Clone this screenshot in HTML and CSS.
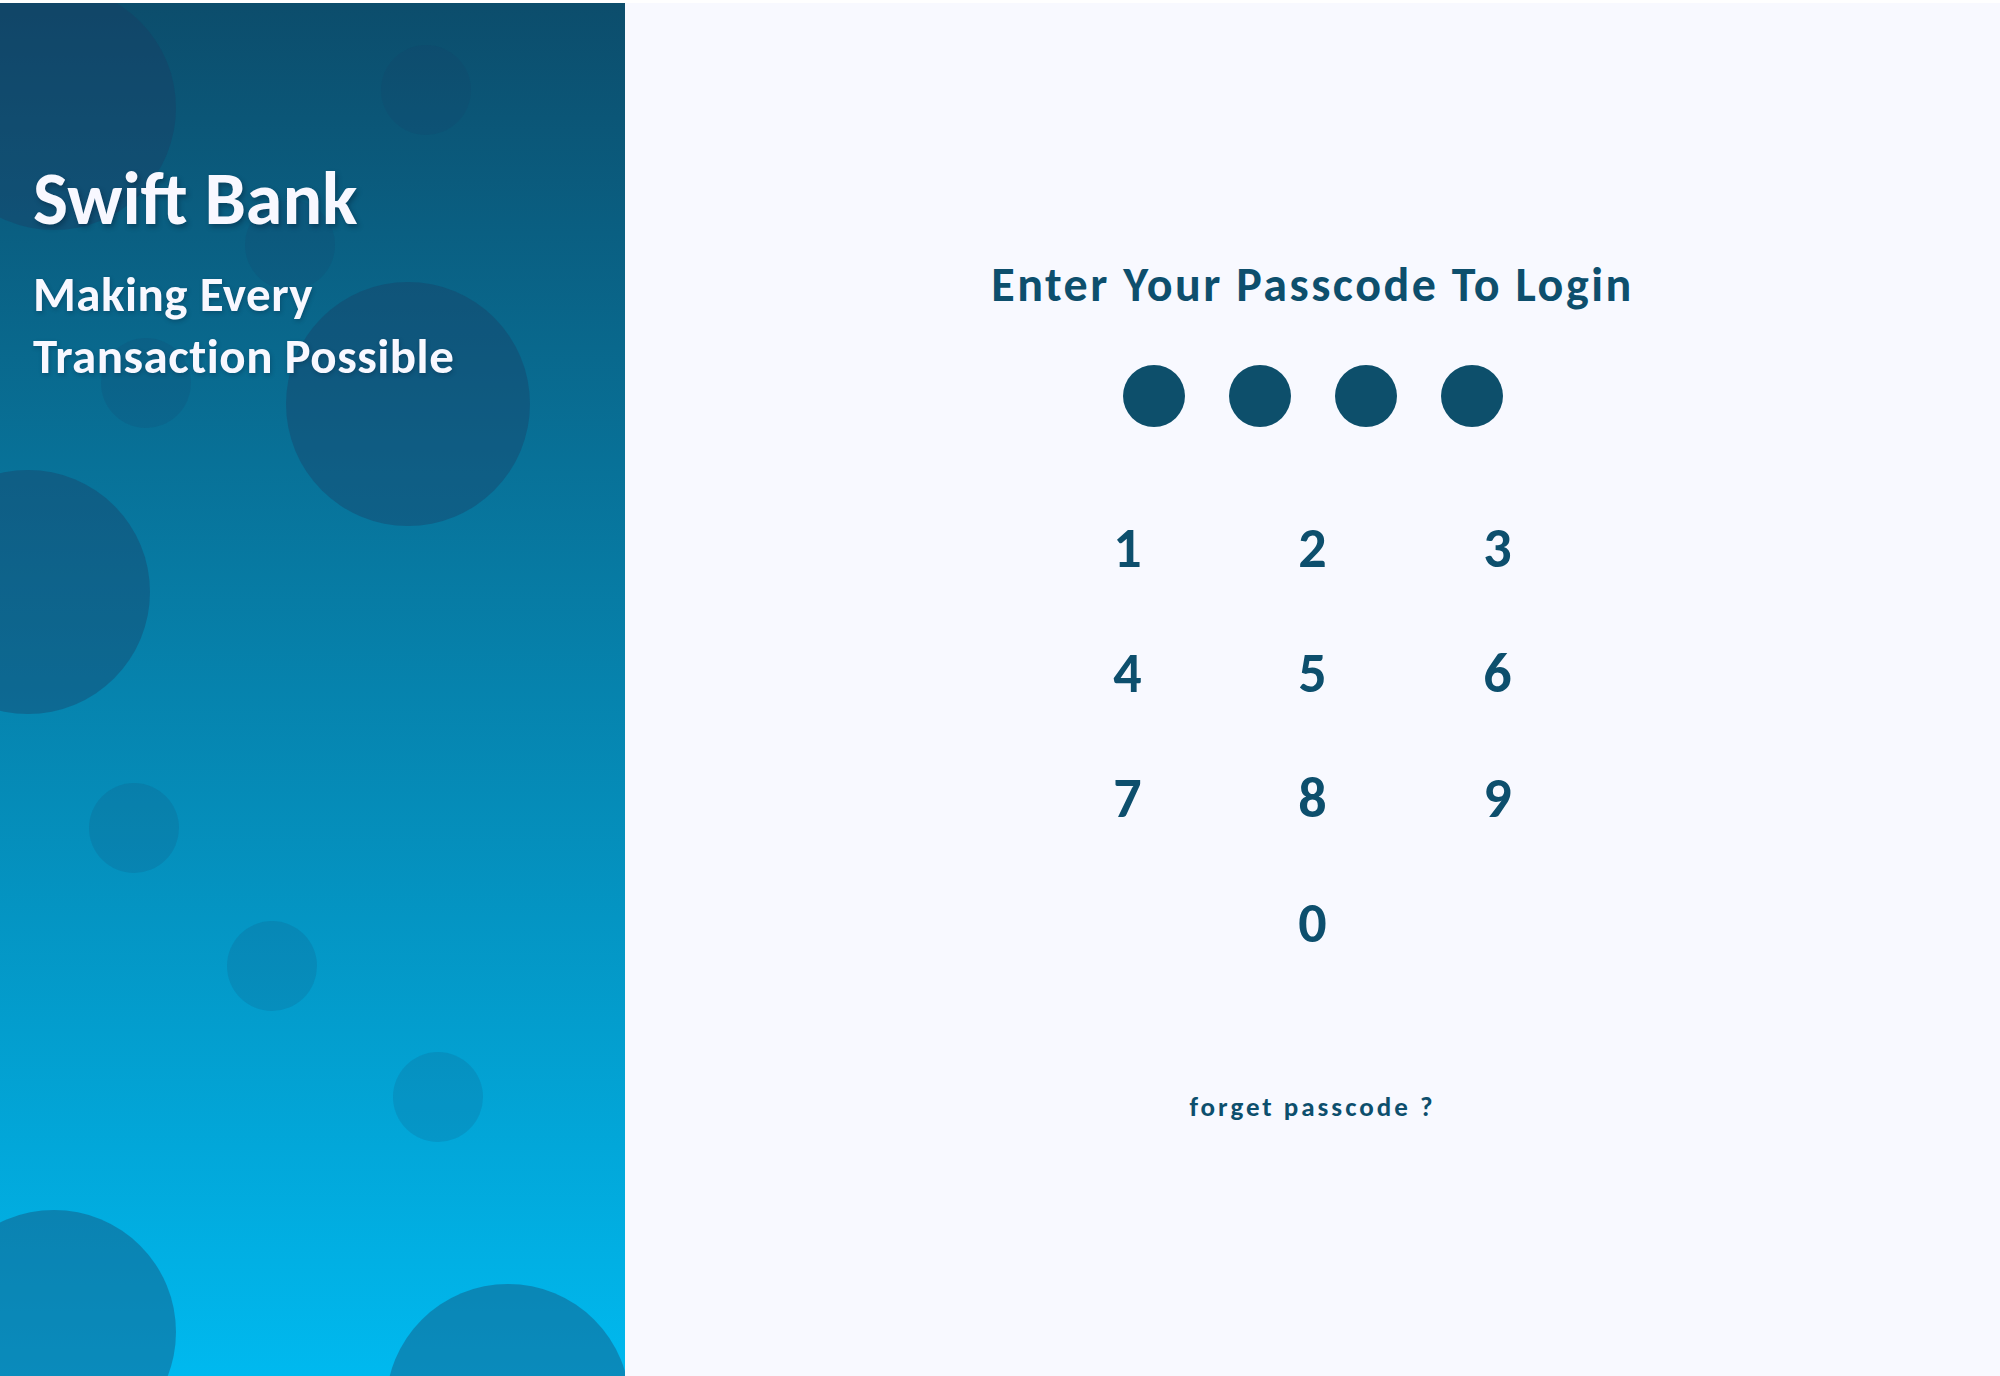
FILE: index.html
```html
<!DOCTYPE html>
<html lang="en">
<head>
<meta charset="utf-8">
<title>Swift Bank - Login</title>
<link rel="stylesheet" href="styles.css">
</head>
<body>
<div class="app">
  <aside class="brand">
    <span class="bubble big b1"></span>
    <span class="bubble small b2"></span>
    <span class="bubble small b3"></span>
    <span class="bubble small b4"></span>
    <span class="bubble big b5"></span>
    <span class="bubble big b6"></span>
    <span class="bubble small b7"></span>
    <span class="bubble small b8"></span>
    <span class="bubble small b9"></span>
    <span class="bubble big b10"></span>
    <span class="bubble big b11"></span>
    <div class="brand-text">
      <h1 class="brand-title">Swift Bank</h1>
      <p class="brand-tagline">Making Every<br>Transaction Possible</p>
    </div>
  </aside>
  <main class="login">
    <h2 class="login-title">Enter Your Passcode To Login</h2>
    <div class="dots">
      <span class="dot"></span>
      <span class="dot"></span>
      <span class="dot"></span>
      <span class="dot"></span>
    </div>
    <div class="keypad">
      <button class="key">1</button>
      <button class="key">2</button>
      <button class="key">3</button>
      <button class="key">4</button>
      <button class="key">5</button>
      <button class="key">6</button>
      <button class="key">7</button>
      <button class="key">8</button>
      <button class="key">9</button>
      <button class="key key-zero">0</button>
    </div>
    <a class="forgot" href="#">forget passcode ?</a>
  </main>
</div>
</body>
</html>
```
FILE: styles.css
```css
* { box-sizing: border-box; }

html, body {
  margin: 0;
  padding: 0;
  background: #ffffff;
}

body {
  font-family: Carlito, Calibri, Lato, "Open Sans", sans-serif;
  font-weight: 700;
}

.app {
  display: flex;
  height: 1373px;
  margin-top: 3px;
}

.brand {
  position: relative;
  width: 625px;
  flex: 0 0 625px;
  overflow: hidden;
  background: linear-gradient(to bottom, #0c4d6c 0%, #00b9ef 100%);
  padding: 159px 0 0 33px;
}

.bubble {
  position: absolute;
  border-radius: 50%;
}

.bubble.big {
  width: 244px;
  height: 244px;
  background: rgba(28, 58, 96, 0.36);
}

.bubble.small {
  width: 90px;
  height: 90px;
  background: rgba(28, 58, 96, 0.14);
}

/* centres in page coordinates minus the 3px top offset */
.b1  { left: -68px; top: -17px; }
.b2  { left: 381px; top: 42px; }
.b3  { left: 245px; top: 197px; }
.b4  { left: 101px; top: 335px; }
.b5  { left: 286px; top: 279px; }
.b6  { left: -94px; top: 467px; }
.b7  { left: 89px;  top: 780px; }
.b8  { left: 227px; top: 918px; }
.b9  { left: 393px; top: 1049px; }
.b10 { left: -68px; top: 1207px; }
.b11 { left: 386px; top: 1281px; }

.brand-text {
  position: relative;
  z-index: 1;
  color: #f8f8ff;
}

.brand-title {
  margin: 0;
  font-size: 74px;
  line-height: 1;
  font-weight: 700;
  text-shadow: 2px 3px 5px rgba(0, 20, 40, 0.35);
}

.brand-tagline {
  margin: 27px 0 0;
  font-size: 49px;
  line-height: 62px;
  letter-spacing: 0.5px;
  text-shadow: 1px 2px 4px rgba(0, 20, 40, 0.25);
}

.login {
  flex: 1;
  background: #f8f9ff;
  display: flex;
  flex-direction: column;
  align-items: center;
  padding-top: 258px;
  color: #0d4f6d;
}

.login-title {
  margin: 0;
  font-size: 48px;
  line-height: 1;
  letter-spacing: 2.5px;
  font-weight: 700;
}

.dots {
  display: flex;
  gap: 44px;
  margin-top: 56px;
}

.dot {
  width: 62px;
  height: 62px;
  border-radius: 50%;
  background: #0d4f6b;
}

.keypad {
  display: grid;
  grid-template-columns: repeat(3, 185px);
  grid-auto-rows: 125px;
  margin-top: 59px;
}

.key {
  font-family: inherit;
  font-weight: 700;
  font-size: 56px;
  line-height: 125px;
  padding: 0;
  border: 0;
  background: transparent;
  color: #0d4f6d;
  text-align: center;
}

.key-zero {
  grid-column: 2;
}

.forgot {
  margin-top: 107px;
  font-size: 27px;
  line-height: 1;
  letter-spacing: 3px;
  color: #0d4f6d;
  text-decoration: none;
}
```
